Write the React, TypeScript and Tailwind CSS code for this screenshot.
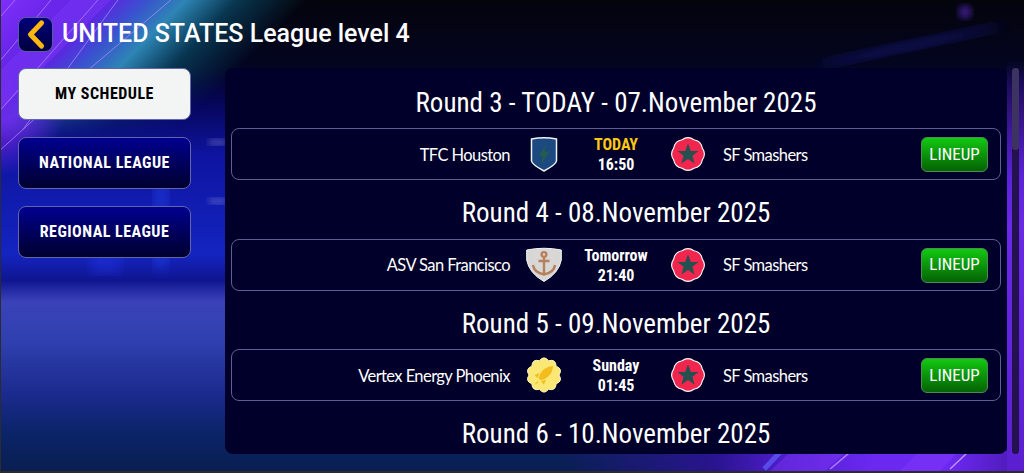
const headFont = "font-['Roboto',sans-serif] [font-stretch:75%]";
const nameFont = "mt-[2px] text-white text-[16.5px] font-['Lato',sans-serif] tracking-[-0.58px]";

const matches = [
  { round: "Round 3 - TODAY - 07.November 2025", home: "TFC Houston", badge: "shield", day: "TODAY", time: "16:50" },
  { round: "Round 4 - 08.November 2025", home: "ASV San Francisco", badge: "anchor", day: "Tomorrow", time: "21:40" },
  { round: "Round 5 - 09.November 2025", home: "Vertex Energy Phoenix", badge: "rocket", day: "Sunday", time: "01:45" },
];

// wavy badge outline: valleys on r1, lobes pulled out to r2
const scallop = (n: number, r1: number, r2: number) => {
  let d = "";
  for (let i = 0; i < n; i++) {
    const a = (2 * Math.PI * i) / n - Math.PI / 2 - Math.PI / n;
    const b = a + Math.PI / n;
    const c = a + (2 * Math.PI) / n;
    const p = (t: number, r: number) => `${(18 + r * Math.cos(t)).toFixed(2)} ${(18 + r * Math.sin(t)).toFixed(2)}`;
    d += `${i === 0 ? `M${p(a, r1)}` : ""} Q${p(b, r2)} ${p(c, r1)}`;
  }
  return d + " Z";
};

const Badge = ({ type }: { type: string }) => {
  if (type === "shield") {
    return (
      <svg viewBox="0 0 36 36" className="w-9 h-9">
        <path d="M5.5 3 Q18 0.5 30.5 3 V25 Q30 28.5 18 35 Q6 28.5 5.5 25 Z" fill="#1c4a80" stroke="#eef2f6" strokeWidth="1.5" />
        <path d="M20.5 8 L13 20 H17 L15 29 L23.5 15.5 H18.5 Z" fill="#245c50" />
      </svg>
    );
  }
  if (type === "anchor") {
    return (
      <svg viewBox="0 0 36 36" className="w-9 h-9">
        <path d="M0.7 3 Q18 -0.5 35.3 3 V13 Q33 26 18 34.5 Q3 26 0.7 13 Z" fill="#d9d7d5" stroke="#f6f6f6" strokeWidth="1" />
        <g fill="none" stroke="#b5815c" strokeWidth="2.4">
          <circle cx="18" cy="7.5" r="2.4" />
          <path d="M18 10 V27 M12.5 14 H23.5 M7 18 Q8 25.5 18 27.5 Q28 25.5 29 18" />
        </g>
      </svg>
    );
  }
  if (type === "rocket") {
    return (
      <svg viewBox="0 0 36 36" className="w-9 h-9">
        <path d={scallop(10, 15, 20)} fill="#fbe774" stroke="#fff5c0" strokeWidth="1" />
        <path d="M27 9 Q20 9 15 15.5 L12.5 21 L15 23.5 L20.5 21 Q27 16 27 9 Z" fill="#f3bd1f" />
        <path d="M13.5 16 L8.5 18 L11.5 21 Z M20 22.5 L18 27.5 L15 24.5 Z M11.5 24 L8 28 L12.5 25.5 Z" fill="#f3bd1f" />
      </svg>
    );
  }
  return (
    <svg viewBox="0 0 36 36" className="w-9 h-9">
      <path d={scallop(8, 15.5, 18.5)} fill="#f0264f" stroke="#fff" strokeWidth="1.1" />
      <polygon points="18,7.5 20.8,15 28.5,15 22.4,19.8 24.6,27.5 18,23 11.4,27.5 13.6,19.8 7.5,15 15.2,15" fill="#24504f" />
    </svg>
  );
};

const Background = () => (
  <svg viewBox="0 0 1024 473" className="absolute inset-0 w-full h-full" preserveAspectRatio="none">
    <defs>
      <filter id="blur6">
        <feGaussianBlur stdDeviation="6" />
      </filter>
      <filter id="blur3">
        <feGaussianBlur stdDeviation="3" />
      </filter>
    </defs>
    <ellipse cx="910" cy="46" rx="95" ry="5" transform="rotate(-12 910 46)" fill="#1c1a90" opacity="0.55" filter="url(#blur6)" />
    <circle cx="965" cy="12" r="7" fill="#4a22a0" opacity="0.7" filter="url(#blur3)" />
    <rect x="153" y="180" width="14" height="90" fill="#2040e0" opacity="0.55" filter="url(#blur6)" />
    <rect x="90" y="252" width="30" height="22" fill="#2030e0" opacity="0.5" filter="url(#blur6)" />
    <rect x="208" y="140" width="18" height="6" fill="#8a90d8" opacity="0.45" filter="url(#blur3)" />
    <rect x="208" y="199" width="18" height="6" fill="#8a90d8" opacity="0.45" filter="url(#blur3)" />
    <g fill="#8a3cff" opacity="0.35">
      <polygon points="0,70 70,0 110,0 0,110" />
      <polygon points="770,473 825,420 880,420 825,473" />
      <polygon points="900,473 950,420 990,420 940,473" />
    </g>
    <g stroke="#b487ff" strokeWidth="1" opacity="0.75">
      <line x1="0" y1="16" x2="14" y2="0" />
      <line x1="0" y1="60" x2="50" y2="0" />
      <line x1="0" y1="110" x2="97" y2="0" />
      <line x1="22" y1="130" x2="117" y2="0" />
      <line x1="0" y1="150" x2="33" y2="120" />
      <line x1="70" y1="85" x2="170" y2="0" />
    </g>
    <g strokeWidth="1.5" opacity="0.9">
      <line x1="830" y1="471" x2="850" y2="454" stroke="#b487ff" />
      <line x1="950" y1="471" x2="968" y2="454" stroke="#c8a0ff" />
      <line x1="764" y1="471" x2="780" y2="454" stroke="#5a50f0" strokeWidth="5" />
    </g>
  </svg>
);

const Row = ({ m }: { m: (typeof matches)[number] }) => (
  <div className="h-[52px] flex items-center border border-[#5f5f93] rounded-lg">
    <div className={`w-[278px] shrink-0 text-right ${nameFont}`}>{m.home}</div>
    <div className="w-[68px] shrink-0 flex justify-center">
      <Badge type={m.badge} />
    </div>
    <div className={`w-[76px] shrink-0 pt-[2px] text-center text-[16px] leading-[20px] font-bold ${headFont}`}>
      <div className={m.day === "TODAY" ? "text-[#fcc813]" : "text-white"}>{m.day}</div>
      <div className="text-white">{m.time}</div>
    </div>
    <div className="w-[67px] shrink-0 flex justify-center">
      <Badge type="star" />
    </div>
    <div className={`flex-1 pl-[2px] ${nameFont}`}>SF Smashers</div>
    <button className={`mr-[12px] mt-[1px] w-[67px] h-[35px] rounded-md border border-[#4f8a55] bg-gradient-to-b from-[#12c912] to-[#056305] text-white text-[17px] ${headFont}`}>
      LINEUP
    </button>
  </div>
);

const SideButton = ({ label, active }: { label: string; active?: boolean }) => (
  <button
    className={`h-[52px] rounded-lg border border-[#6464a8] text-[16px] font-bold tracking-[0.5px] ${headFont} ${
      active ? "bg-[#f3f5f5] text-black" : "bg-gradient-to-b from-[#000090] to-[#000030] text-white"
    }`}
  >
    {label}
  </button>
);

const RoundTitle = ({ text }: { text: string }) => (
  <h2 className={`h-[58.5px] leading-[66px] text-center text-white text-[27px] tracking-[0.03px] ${headFont}`}>{text}</h2>
);

export default function App() {
  return (
    <div className="relative w-[1024px] h-[473px] overflow-hidden bg-[linear-gradient(180deg,#04040c_0%,#030520_14%,#06065a_22%,#0e14a0_33%,#1424c0_54%,#0f1590_59.5%,#3a42b8_64%,#3040b0_72%,#1a2a8c_84%,#0a2468_92%,#0a1e50_100%)] border-l border-b-2 border-[#2c2c30]">
      <div className="absolute inset-0 bg-[radial-gradient(ellipse_70px_90px_at_0px_85px,#7428ee_40%,transparent)]" />
      <div className="absolute inset-0 [mask-image:linear-gradient(180deg,black_68px,transparent_140px)] bg-[linear-gradient(135deg,#7f2ffa_0,#6a26ea_40px,#5a28e0_78px,#3a50d0_102px,rgba(46,136,184,0.98)_131px,rgba(10,70,100,0.75)_168px,transparent_218px)]" />
      <div className="absolute inset-x-0 bottom-0 h-[20px] bg-[linear-gradient(90deg,transparent_0%,transparent_55%,#2a1490_70%,#4c1cc8_76%,#6a28f0_85%,#6a28f0_93%,#4a18b0_100%)]" />
      <div className="absolute right-0 top-[60px] bottom-0 w-[17px] bg-[linear-gradient(180deg,transparent_0%,#2a1070_10%,#5a22d8_28%,#6a28e8_40%,#5a1fd0_100%)]" />
      <Background />
      <div className="relative flex flex-col h-full">
        <header className="h-[68px] flex items-center pl-[17px] gap-[9px] shrink-0">
          <button className="w-[35px] h-[35px] rounded-lg border border-[#5a5aa0] bg-gradient-to-b from-[#00007a] to-[#000040] flex items-center justify-center">
            <svg viewBox="0 0 20 30" className="w-[22px] h-[33px]">
              <path d="M15 4.5 L5 15 L15 25.5" fill="none" stroke="#fcb711" strokeWidth="4.6" strokeLinecap="round" strokeLinejoin="round" />
            </svg>
          </button>
          <h1 className="text-white text-[25px] font-medium font-['Roboto',sans-serif]">UNITED STATES League level 4</h1>
        </header>
        <div className="flex pl-[17px]">
          <nav className="w-[173px] flex flex-col gap-[17px] shrink-0">
            <SideButton label="MY SCHEDULE" active />
            <SideButton label="NATIONAL LEAGUE" />
            <SideButton label="REGIONAL LEAGUE" />
          </nav>
          <main className="ml-[34px] w-[782px] h-[386px] bg-[#00002a] rounded-lg px-[6px] pt-[1.5px] overflow-hidden">
            {matches.map((m) => (
              <section key={m.round}>
                <RoundTitle text={m.round} />
                <Row m={m} />
              </section>
            ))}
            <RoundTitle text="Round 6 - 10.November 2025" />
          </main>
          <div className="ml-[5px] w-[7px] h-[386px] rounded-full bg-[#24124f]">
            <div className="w-full h-[82px] rounded-full bg-[#3c3361]" />
          </div>
        </div>
      </div>
    </div>
  );
}
